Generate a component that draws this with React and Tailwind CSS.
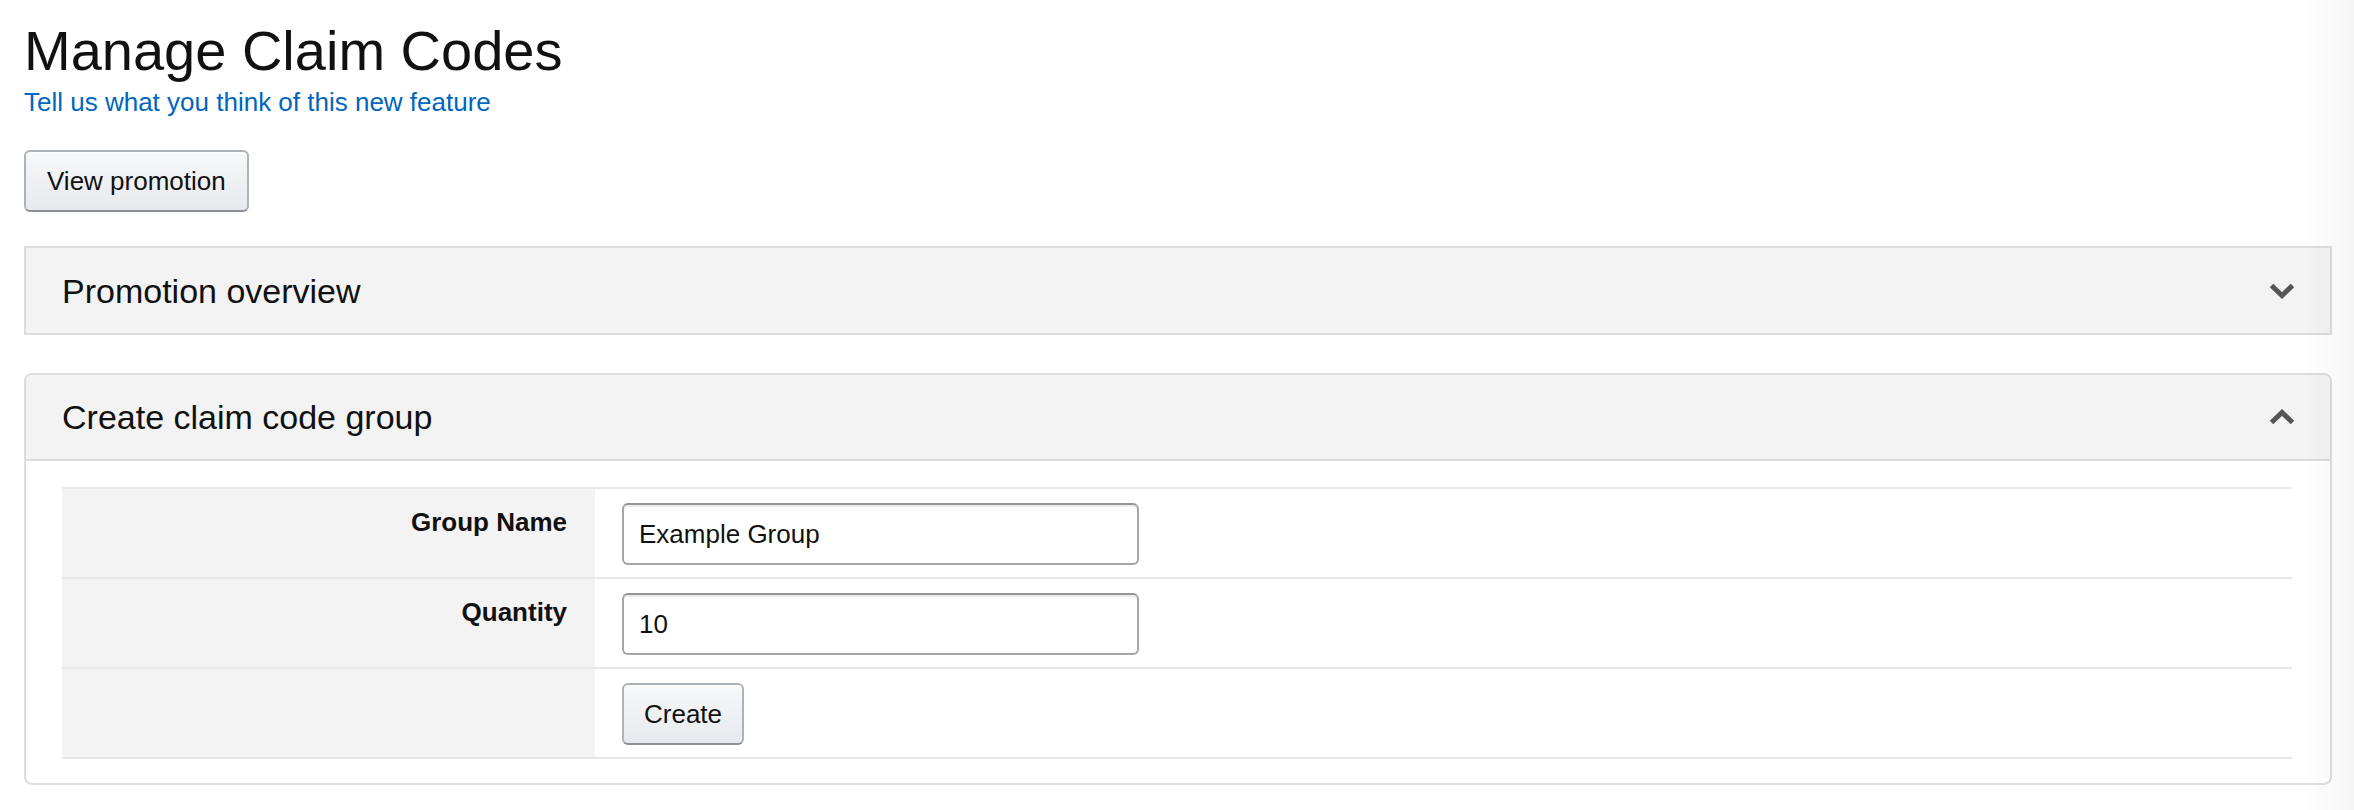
import React from 'react';

function Chevron({ up = false }) {
  return (
    <svg width="28" height="18" viewBox="0 0 28 18" className="mr-[34px] shrink-0">
      <path
        d={up ? 'M3.5 14.5 L14 4.5 L24.5 14.5' : 'M3.5 3.5 L14 13.5 L24.5 3.5'}
        fill="none"
        stroke="#555555"
        strokeWidth="5"
      />
    </svg>
  );
}

function AmzButton({ children, className = '' }) {
  return (
    <button
      type="button"
      className={`h-[62px] rounded-[6px] border-2 border-[#adb1b8] border-b-[#8d9096] bg-gradient-to-b from-[#f7f8fa] to-[#e7e9ec] text-[26px] leading-[38px] text-[#111] shadow-[inset_0_2px_0_rgba(255,255,255,0.6)] ${className}`}
    >
      {children}
    </button>
  );
}

function FormRow({ label, children }) {
  return (
    <div className="flex h-[90px] border-t-2 border-[#e7e7e7]">
      <div className="w-[533px] shrink-0 bg-[#f3f3f3] pr-[28px] pt-[14px] text-right text-[26px] font-bold leading-[38px]">
        {label}
      </div>
      <div className="pl-[27px] pt-[14px]">{children}</div>
    </div>
  );
}

function TextField({ value }) {
  return (
    <input
      readOnly
      value={value}
      className="h-[62px] w-[517px] rounded-[6px] border-2 border-[#a6a6a6] border-t-[#949494] bg-white px-[15px] text-[26px] text-[#111] shadow-[inset_0_2px_0_rgba(0,0,0,0.07)] outline-none"
    />
  );
}

export default function App() {
  return (
    <div className="relative min-h-[810px] bg-white pl-[24px] pr-[22px] pt-[19px] font-['Liberation_Sans',Arial,sans-serif] text-[#111]">
      <h1 className="text-[56px] font-normal leading-[64px]">Manage Claim Codes</h1>
      <a href="#" className="block text-[26px] leading-[38px] text-[#0066c0]">
        Tell us what you think of this new feature
      </a>

      <AmzButton className="mt-[29px] px-[21px]">View promotion</AmzButton>

      <section className="mt-[34px] flex h-[89px] items-center justify-between border-2 border-[#dddddd] bg-[#f3f3f3]">
        <h3 className="pl-[36px] text-[34px] leading-[48px]">Promotion overview</h3>
        <Chevron />
      </section>

      <section className="mt-[38px] rounded-[8px] border-2 border-[#dddddd]">
        <div className="flex h-[86px] items-center justify-between rounded-t-[6px] border-b-2 border-[#dddddd] bg-[#f3f3f3]">
          <h3 className="pl-[36px] text-[34px] leading-[48px]">Create claim code group</h3>
          <Chevron up />
        </div>
        <div className="pb-[24px] pl-[36px] pr-[38px] pt-[26px]">
          <div className="border-b-2 border-[#e7e7e7]">
            <FormRow label="Group Name">
              <TextField value="Example Group" />
            </FormRow>
            <FormRow label="Quantity">
              <TextField value="10" />
            </FormRow>
            <FormRow label="">
              <AmzButton className="px-[20px]">Create</AmzButton>
            </FormRow>
          </div>
        </div>
      </section>

      <div className="pointer-events-none absolute right-0 top-0 h-full w-[50px] bg-gradient-to-r from-transparent to-[rgba(0,0,0,0.04)]" />
    </div>
  );
}
